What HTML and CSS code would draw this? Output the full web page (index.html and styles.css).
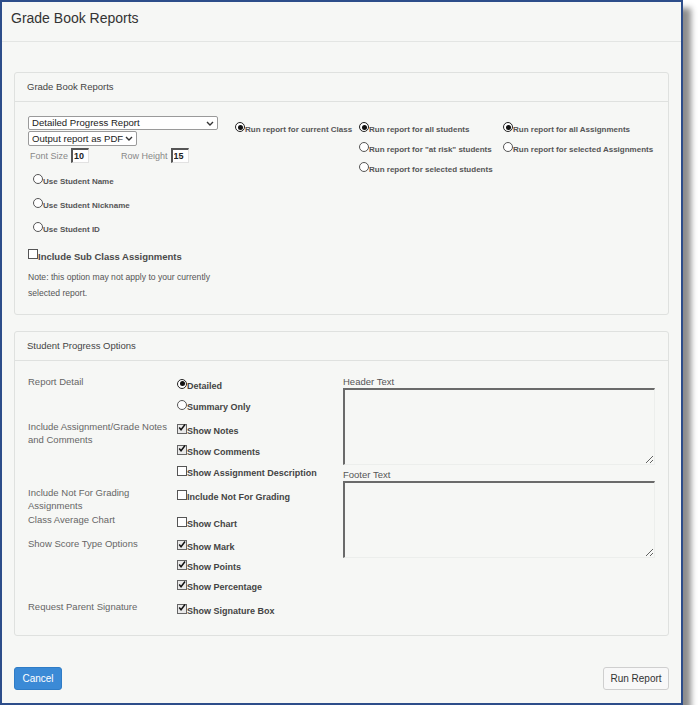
FILE: index.html
```html
<!DOCTYPE html>
<html lang="en">
<head>
    <meta charset="UTF-8">
    <meta name="viewport" content="width=device-width, initial-scale=1.0">
    <title>Grade Book Reports</title>
    <link rel="stylesheet" href="styles.css">
</head>
<body>
    <div class="dialog">
        <div class="dialog-header">
            <h1>Grade Book Reports</h1>
        </div>

        <div class="dialog-body">
            <div class="panel panel-reports">
                <div class="panel-heading">Grade Book Reports</div>
                <div class="panel-content report-grid">
                    <div class="col-main">
                        <div class="select-wrap select-report">
                            <select><option>Detailed Progress Report</option></select>
                            <svg class="chevron" width="8" height="5" viewBox="0 0 8 5"><path d="M1 1 L4 4 L7 1" fill="none" stroke="#333" stroke-width="1.4"/></svg>
                        </div>
                        <div class="select-wrap select-output">
                            <select><option>Output report as PDF</option></select>
                            <svg class="chevron" width="8" height="5" viewBox="0 0 8 5"><path d="M1 1 L4 4 L7 1" fill="none" stroke="#333" stroke-width="1.4"/></svg>
                        </div>
                        <div class="size-row">
                            <label class="size-label">Font Size</label>
                            <input type="text" class="size-input" value="10">
                            <label class="size-label row-height">Row Height</label>
                            <input type="text" class="size-input" value="15">
                        </div>
                        <div class="name-options">
                            <div class="opt small name-opt"><span class="radio"></span>Use Student Name</div>
                            <div class="opt small name-opt"><span class="radio"></span>Use Student Nickname</div>
                            <div class="opt small name-opt"><span class="radio"></span>Use Student ID</div>
                        </div>
                        <div class="opt sub-class"><span class="check"></span>Include Sub Class Assignments</div>
                        <p class="note">Note: this option may not apply to your currently selected report.</p>
                    </div>

                    <div class="col-radios">
                        <div class="opt small run-opt"><span class="radio on"></span>Run report for current Class</div>
                    </div>

                    <div class="col-radios">
                        <div class="opt small run-opt"><span class="radio on"></span>Run report for all students</div>
                        <div class="opt small run-opt"><span class="radio"></span>Run report for "at risk" students</div>
                        <div class="opt small run-opt"><span class="radio"></span>Run report for selected students</div>
                    </div>

                    <div class="col-radios">
                        <div class="opt small run-opt"><span class="radio on"></span>Run report for all Assignments</div>
                        <div class="opt small run-opt"><span class="radio"></span>Run report for selected Assignments</div>
                    </div>
                </div>
            </div>

            <div class="panel panel-progress">
                <div class="panel-heading">Student Progress Options</div>
                <div class="panel-content progress-layout">
                    <div class="groups">
                        <div class="group">
                            <div class="group-label">Report Detail</div>
                            <div class="group-options">
                                <div class="opt"><span class="radio on"></span>Detailed</div>
                                <div class="opt"><span class="radio"></span>Summary Only</div>
                            </div>
                        </div>
                        <div class="group">
                            <div class="group-label">Include Assignment/Grade Notes and Comments</div>
                            <div class="group-options">
                                <div class="opt"><span class="check on"><svg width="10" height="9" viewBox="0 0 10 9"><path d="M1.5 4.5 L3.8 7.3 L8.8 0.8" fill="none" stroke="#111" stroke-width="1.8"/></svg></span>Show Notes</div>
                                <div class="opt"><span class="check on"><svg width="10" height="9" viewBox="0 0 10 9"><path d="M1.5 4.5 L3.8 7.3 L8.8 0.8" fill="none" stroke="#111" stroke-width="1.8"/></svg></span>Show Comments</div>
                                <div class="opt"><span class="check"></span>Show Assignment Description</div>
                            </div>
                        </div>
                        <div class="group">
                            <div class="group-label">Include Not For Grading Assignments</div>
                            <div class="group-options">
                                <div class="opt"><span class="check"></span>Include Not For Grading</div>
                            </div>
                        </div>
                        <div class="group">
                            <div class="group-label">Class Average Chart</div>
                            <div class="group-options">
                                <div class="opt"><span class="check"></span>Show Chart</div>
                            </div>
                        </div>
                        <div class="group">
                            <div class="group-label">Show Score Type Options</div>
                            <div class="group-options score-options">
                                <div class="opt"><span class="check on"><svg width="10" height="9" viewBox="0 0 10 9"><path d="M1.5 4.5 L3.8 7.3 L8.8 0.8" fill="none" stroke="#111" stroke-width="1.8"/></svg></span>Show Mark</div>
                                <div class="opt"><span class="check on"><svg width="10" height="9" viewBox="0 0 10 9"><path d="M1.5 4.5 L3.8 7.3 L8.8 0.8" fill="none" stroke="#111" stroke-width="1.8"/></svg></span>Show Points</div>
                                <div class="opt"><span class="check on"><svg width="10" height="9" viewBox="0 0 10 9"><path d="M1.5 4.5 L3.8 7.3 L8.8 0.8" fill="none" stroke="#111" stroke-width="1.8"/></svg></span>Show Percentage</div>
                            </div>
                        </div>
                        <div class="group">
                            <div class="group-label">Request Parent Signature</div>
                            <div class="group-options">
                                <div class="opt"><span class="check on"><svg width="10" height="9" viewBox="0 0 10 9"><path d="M1.5 4.5 L3.8 7.3 L8.8 0.8" fill="none" stroke="#111" stroke-width="1.8"/></svg></span>Show Signature Box</div>
                            </div>
                        </div>
                    </div>

                    <div class="text-fields">
                        <label class="field-label">Header Text</label>
                        <textarea class="field"></textarea>
                        <label class="field-label footer-label">Footer Text</label>
                        <textarea class="field"></textarea>
                    </div>
                </div>
            </div>

            <div class="actions">
                <button class="btn btn-primary">Cancel</button>
                <button class="btn btn-default">Run Report</button>
            </div>
        </div>
    </div>
</body>
</html>
```

FILE: styles.css
```css
body {
    margin: 0;
    background-color: #fff;
    font-family: "Liberation Sans", Arial, sans-serif;
}

.dialog {
    width: 683px;
    height: 705px;
    box-sizing: border-box;
    border: 2px solid #2d4d8a;
    background-color: #f6f7f5;
    box-shadow: 8px 8px 6px rgba(0, 0, 0, 0.45);
}

.dialog-header {
    height: 31px;
    padding: 8px 0 0 9px;
    border-bottom: 1px solid #e3e5e3;
}

h1 {
    margin: 0;
    font-size: 14px;
    line-height: 16px;
    font-weight: normal;
    color: #333;
}

.dialog-body {
    padding: 30px 12px 0;
}

.panel {
    border: 1px solid #dfe1df;
    border-radius: 3px;
}

.panel-heading {
    height: 28px;
    line-height: 28px;
    padding-left: 12px;
    border-bottom: 1px solid #dfe1df;
    font-size: 9.5px;
    color: #444;
}

.panel-content {
    padding: 14px 13px 13px;
}

/* top panel */
.report-grid {
    display: grid;
    grid-template-columns: 207px 124px 144px 1fr;
}

.select-wrap {
    position: relative;
}

.select-wrap select {
    appearance: none;
    -webkit-appearance: none;
    display: block;
    width: 100%;
    box-sizing: border-box;
    margin: 0;
    padding: 0 0 0 3px;
    border: 1px solid #9a9a9a;
    border-radius: 2px;
    background-color: #fff;
    font-family: inherit;
    font-size: 9.6px;
    color: #222;
}

.select-report {
    width: 190px;
}

.select-report select {
    height: 14px;
    line-height: 12px;
}

.select-output {
    width: 109px;
    margin-top: 1px;
}

.select-output select {
    height: 15px;
    line-height: 13px;
}

.chevron {
    position: absolute;
    right: 4px;
    top: 5px;
}

.size-row {
    display: flex;
    align-items: center;
    height: 15px;
    margin-top: 2px;
    padding-left: 2px;
}

.size-label {
    font-size: 9px;
    color: #888;
    margin-right: 3px;
}

.row-height {
    margin-left: 32px;
}

.size-input {
    width: 18px;
    height: 15px;
    box-sizing: border-box;
    margin: 0;
    padding: 0 0 0 1px;
    border: 1px solid #e2e2e2;
    border-top: 2px solid #555;
    border-left: 2px solid #555;
    background-color: #fff;
    font-family: inherit;
    font-size: 9px;
    font-weight: bold;
    color: #222;
}

.name-options {
    margin-top: 6px;
}

.opt {
    display: flex;
    align-items: center;
    height: 21px;
    font-size: 9px;
    font-weight: bold;
    color: #444;
    white-space: nowrap;
}

.opt.small {
    font-size: 8px;
    color: #555;
}

.name-opt {
    height: 24px;
    padding-left: 5px;
}

.run-opt {
    height: 20px;
}

.sub-class {
    height: 18px;
    margin-top: 6px;
    font-size: 9.5px;
    color: #4a4a4a;
}

.radio {
    width: 10px;
    height: 10px;
    box-sizing: border-box;
    margin-bottom: 4px;
    border: 1px solid #555;
    border-radius: 50%;
    background-color: #fff;
    display: flex;
    align-items: center;
    justify-content: center;
    flex-shrink: 0;
}

.radio.on {
    border-color: #222;
}

.radio.on::after {
    content: "";
    width: 5px;
    height: 5px;
    border-radius: 50%;
    background-color: #111;
}

.check {
    width: 10px;
    height: 10px;
    box-sizing: border-box;
    margin-bottom: 4px;
    border: 1px solid #555;
    background-color: #fff;
    display: flex;
    align-items: center;
    justify-content: center;
    flex-shrink: 0;
}

.check.on {
    background-color: #e9e9e9;
    border-color: #666;
}

.check svg {
    display: block;
    margin-top: -2px;
}

.note {
    max-width: 190px;
    margin: 4px 0 0;
    font-size: 8.6px;
    line-height: 16px;
    color: #555;
}

.col-radios {
    padding-top: 3px;
}

/* bottom panel */
.panel-progress {
    margin-top: 16px;
}

.progress-layout {
    display: flex;
    padding: 14px 13px 14px;
}

.groups {
    width: 315px;
}

.group {
    display: flex;
    align-items: flex-start;
}

.group + .group {
    margin-top: 3px;
}

.group-label {
    width: 149px;
    max-height: 24px;
    font-size: 9.5px;
    line-height: 13px;
    color: #666;
}

.group-options {
    display: flex;
    flex-direction: column;
}

.score-options .opt {
    height: 20px;
}

.text-fields {
    width: 312px;
    display: flex;
    flex-direction: column;
}

.field-label {
    font-size: 9.5px;
    line-height: 13px;
    color: #555;
}

.footer-label {
    margin-top: 3px;
}

.field {
    height: 77px;
    box-sizing: border-box;
    margin: 0;
    border: 1px solid #eceeec;
    border-top: 2px solid #6a6a6a;
    border-left: 2px solid #6a6a6a;
    background-color: #f6f7f5;
}

.actions {
    display: flex;
    justify-content: space-between;
    margin-top: 31px;
}

.btn {
    height: 23px;
    padding: 0 9px;
    border-radius: 3px;
    font-family: inherit;
    font-size: 10px;
    cursor: pointer;
}

.btn-primary {
    width: 48px;
    padding: 0;
    border: 1px solid #2f7cc6;
    background-color: #3b8ad6;
    color: #fff;
}

.btn-default {
    width: 66px;
    padding: 0;
    border: 1px solid #cfcfcf;
    background-color: #f8f8f8;
    color: #333;
}
```
